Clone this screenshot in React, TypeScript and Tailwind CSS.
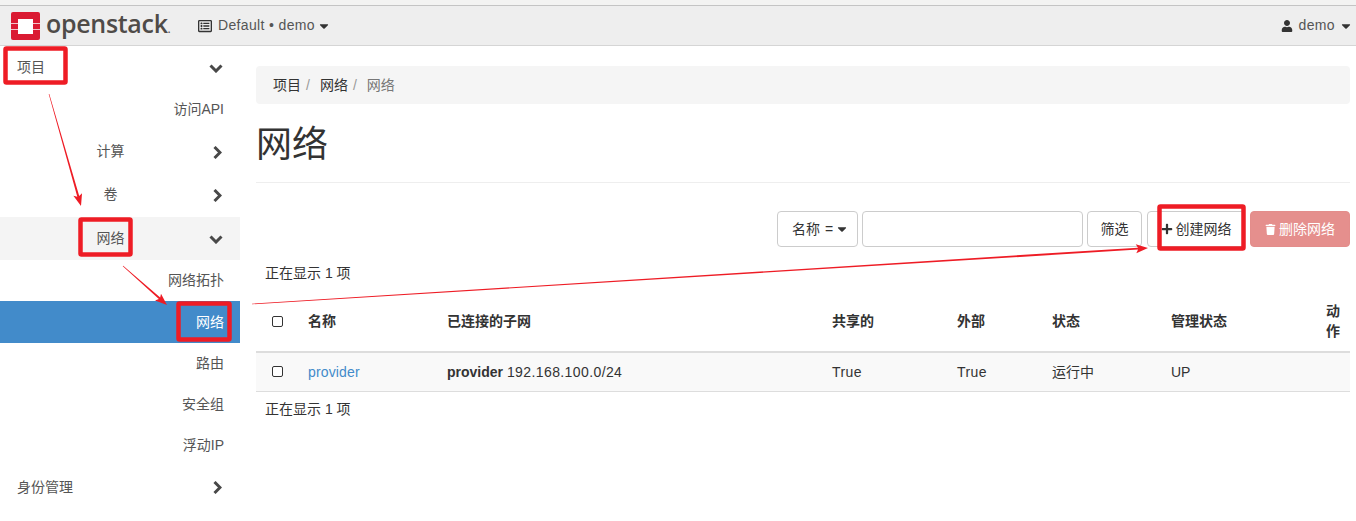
import { FaCaretDown, FaPlus, FaRegListAlt, FaTrash, FaUser } from "react-icons/fa";

const FONT = "font-['Liberation_Sans','Noto_Sans_CJK_SC',sans-serif]";

function Logo() {
  return (
    <svg width="29" height="28" viewBox="0 0 29 28" className="shrink-0">
      <rect width="29" height="28" rx="2" fill="#da1a32" />
      <rect x="7" y="7" width="15" height="15" fill="#ffffff" />
      <rect x="0" y="11" width="7" height="1" fill="#f3c4ca" />
      <rect x="0" y="17" width="7" height="1" fill="#f3c4ca" />
      <rect x="22" y="11" width="7" height="1" fill="#f3c4ca" />
      <rect x="22" y="17" width="7" height="1" fill="#f3c4ca" />
    </svg>
  );
}

function ChevronDown() {
  return (
    <svg width="14" height="9" viewBox="0 0 14 9">
      <path d="M1.5 1.5L7 7L12.5 1.5" fill="none" stroke="#484848" strokeWidth="3" />
    </svg>
  );
}

function ChevronRight() {
  return (
    <svg width="9" height="13" viewBox="0 0 9 13">
      <path d="M1.5 1L7 6.5L1.5 12" fill="none" stroke="#484848" strokeWidth="3" />
    </svg>
  );
}

function NavRow({ label, open, shaded, height }: { label: string; open?: boolean; shaded?: boolean; height: string }) {
  return (
    <div className={`relative flex items-center justify-center text-[14px] text-[#555] ${height} ${shaded ? "bg-[#f4f4f4]" : ""}`}>
      <span className="mr-[19px]">{label}</span>
      {open ? (
        <span className="absolute right-[17px] top-[18px] flex"><ChevronDown /></span>
      ) : (
        <span className="absolute right-[18px] top-[16px] flex"><ChevronRight /></span>
      )}
    </div>
  );
}

function SubRow({ label, active, height = "h-[41px]" }: { label: string; active?: boolean; height?: string }) {
  return (
    <div className={`flex items-center justify-end pr-[16px] text-[14px] ${height} ${active ? "bg-[#428bca] text-white" : "text-[#555]"}`}>
      {label}
    </div>
  );
}

function Sidebar() {
  return (
    <aside className="w-[240px] shrink-0">
      <div className="relative flex h-[43px] items-center pl-[17px] text-[14px] text-[#555]">
        项目
        <span className="absolute right-[17px] top-[18px] flex"><ChevronDown /></span>
      </div>
      <SubRow label="访问API" />
      <NavRow label="计算" height="h-[43px]" />
      <NavRow label="卷" height="h-[44px] pb-[2px]" />
      <NavRow label="网络" open shaded height="h-[43px]" />
      <SubRow label="网络拓扑" />
      <SubRow label="网络" active height="h-[42px]" />
      <SubRow label="路由" />
      <SubRow label="安全组" />
      <SubRow label="浮动IP" height="h-[40px]" />
      <div className="relative flex h-[44px] items-center pl-[17px] text-[14px] text-[#555]">
        身份管理
        <span className="absolute right-[18px] top-[16px] flex"><ChevronRight /></span>
      </div>
    </aside>
  );
}

function Toolbar() {
  return (
    <div className="mt-[28px] flex h-[36px] justify-end text-[14px] text-[#333]">
      <button type="button" className="flex w-[81px] items-center rounded border border-[#ccc] bg-white pl-[14px]">
        名称<span className="ml-[5px]">=</span><FaCaretDown className="ml-[2px] text-[14px]" />
      </button>
      <input className="ml-[4px] w-[221px] rounded border border-[#ccc] bg-white" />
      <button type="button" className="ml-[4px] w-[55px] rounded border border-[#ccc] bg-white">筛选</button>
      <button type="button" className="ml-[5px] flex w-[98px] items-center justify-center gap-[3px] rounded border border-[#ccc] bg-white">
        <FaPlus className="text-[12px]" /> 创建网络
      </button>
      <button type="button" className="ml-[5px] flex w-[100px] items-center justify-center gap-[3px] rounded border border-[#e38d8b] bg-[#e58f8d] text-white">
        <FaTrash className="text-[11px]" /> 删除网络
      </button>
    </div>
  );
}

function Box() {
  return <span className="block h-[11px] w-[11px] rounded-[2px] border border-[#333] bg-white" />;
}

function NetworkTable() {
  return (
    <table className="w-full table-fixed border-collapse text-left text-[14px] text-[#333]">
      <colgroup>
        <col className="w-[44px]" />
        <col className="w-[139px]" />
        <col className="w-[385px]" />
        <col className="w-[125px]" />
        <col className="w-[95px]" />
        <col className="w-[119px]" />
        <col className="w-[155px]" />
        <col className="w-[32px]" />
      </colgroup>
      <thead>
        <tr className="h-[53px] border-b-2 border-[#ddd] font-bold">
          <th className="pb-[8px] pl-[16px]"><Box /></th>
          <th className="pb-[8px] pl-[8px]">名称</th>
          <th className="pb-[8px] pl-[8px]">已连接的子网</th>
          <th className="pb-[8px] pl-[8px]">共享的</th>
          <th className="pb-[8px] pl-[8px]">外部</th>
          <th className="pb-[8px] pl-[8px]">状态</th>
          <th className="pb-[8px] pl-[8px]">管理状态</th>
          <th className="pb-[8px] pl-[8px] leading-[20px]">动作</th>
        </tr>
      </thead>
      <tbody>
        <tr className="h-[39px] border-b border-[#ddd] bg-[#f9f9f9]">
          <td className="pl-[16px]"><Box /></td>
          <td className="pl-[8px] pt-[2px] tracking-[0.15px] text-[#428bca]">provider</td>
          <td className="pl-[8px] pt-[2px]"><b>provider</b> <span className="tracking-[0.4px]">192.168.100.0/24</span></td>
          <td className="pl-[8px] pt-[2px] tracking-[0.4px]">True</td>
          <td className="pl-[8px] pt-[2px] tracking-[0.4px]">True</td>
          <td className="pl-[8px] pt-[2px]">运行中</td>
          <td className="pl-[8px] pt-[2px]">UP</td>
          <td />
        </tr>
      </tbody>
    </table>
  );
}

// red marks drawn over the page: tapered arrows widen toward the head
function Arrow({ x1, y1, x2, y2 }: { x1: number; y1: number; x2: number; y2: number }) {
  const len = Math.hypot(x2 - x1, y2 - y1);
  const ux = (x2 - x1) / len;
  const uy = (y2 - y1) / len;
  const nx = -uy;
  const ny = ux;
  const bx = x2 - ux * 10;
  const by = y2 - uy * 10;
  const pts = [
    [x1 + nx * 0.3, y1 + ny * 0.3],
    [bx + nx * 1, by + ny * 1],
    [bx + nx * 4.5 - ux * 2, by + ny * 4.5 - uy * 2],
    [x2, y2],
    [bx - nx * 4.5 - ux * 2, by - ny * 4.5 - uy * 2],
    [bx - nx * 1, by - ny * 1],
    [x1 - nx * 0.3, y1 - ny * 0.3],
  ];
  return <polygon points={pts.map((p) => p.join(",")).join(" ")} fill="#ee1c25" />;
}

function Annotations() {
  const boxes = [
    [5.5, 48.5, 60, 34],
    [80.5, 219.5, 50, 35],
    [178.5, 303.5, 51, 36],
    [1159.5, 206.5, 84, 42],
  ];
  return (
    <svg width="1356" height="521" className="pointer-events-none absolute left-0 top-0">
      {boxes.map(([x, y, w, h]) => (
        <rect key={x} x={x} y={y} width={w} height={h} fill="none" stroke="#ee1c25" strokeWidth="4.5" rx="1" />
      ))}
      <Arrow x1={49} y1={94} x2={81} y2={206} />
      <Arrow x1={123} y1={266} x2={167} y2={305} />
      <Arrow x1={252} y1={304} x2={1148} y2={248} />
    </svg>
  );
}

export default function App() {
  return (
    <div className={`relative h-[521px] w-[1356px] overflow-hidden bg-white ${FONT}`}>
      <div className="h-[6px] border-b border-[#c4c4c4] bg-[#f3f3f2]" />
      <header className="flex h-[40px] items-center border-b border-[#d5d5d5] bg-[#eeeeee] text-[14px] text-[#555]">
        <div className="ml-[11px] flex w-[187px] items-center gap-[6px]">
          <Logo />
          <span className="mb-[5px] font-['Open_Sans',sans-serif] text-[25px] font-semibold leading-none tracking-[-0.3px] text-[#4f4b48]">
            openstack<span className="text-[10px]">.</span>
          </span>
        </div>
        <FaRegListAlt className="text-[14px] text-[#333]" />
        <span className="ml-[6px] tracking-[0.35px]">Default • demo</span>
        <FaCaretDown className="ml-[2px] text-[14px] text-[#333]" />
        <span className="ml-auto flex items-center pr-[3px] tracking-[0.35px]">
          <FaUser className="mr-[6px] text-[12px] text-[#333]" />
          demo
          <FaCaretDown className="ml-[4px] text-[14px] text-[#333]" />
        </span>
      </header>
      <div className="flex">
        <Sidebar />
        <main className="min-w-0 flex-1 pl-[16px] pr-[6px] pt-[20px]">
          <div className="flex h-[38px] items-center rounded bg-[#f5f5f5] pl-[17px] text-[14px] text-[#333]">
            项目<span className="pl-[5px] pr-[10px] text-[#999]">/</span>网络<span className="pl-[5px] pr-[10px] text-[#999]">/</span>
            <span className="text-[#777]">网络</span>
          </div>
          <h1 className="mt-[21px] h-[57px] text-[36px] font-normal leading-[40px] text-[#333]">网络</h1>
          <div className="border-b border-[#eee]" />
          <Toolbar />
          <p className="mt-[16px] h-[36px] pl-[9px] text-[14px] leading-[20px] text-[#333]">正在显示 1 项</p>
          <NetworkTable />
          <p className="mt-[7px] pl-[9px] text-[14px] leading-[20px] text-[#333]">正在显示 1 项</p>
        </main>
      </div>
      <Annotations />
    </div>
  );
}
